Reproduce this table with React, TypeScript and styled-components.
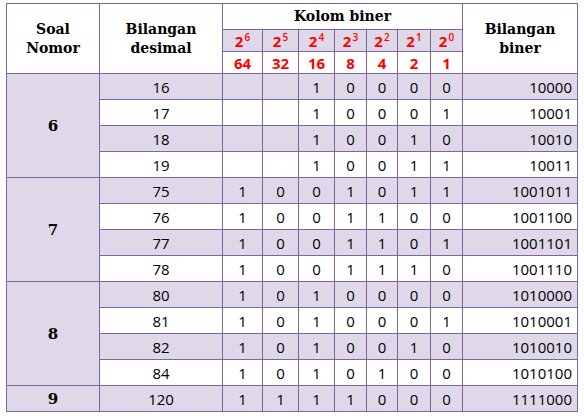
import React from 'react';
import styled, { createGlobalStyle, css } from 'styled-components';

const GlobalStyle = createGlobalStyle`
  body {
    margin: 0;
    background: #ffffff;
  }
`;

const LINE = '#8064a2';
const SHADE = '#dfd8e8';

const Wrapper = styled.div`
  padding: 3px 0 0 6px;
`;

const Table = styled.table`
  border-collapse: collapse;
  table-layout: fixed;
  width: 572px;
  border: 1px solid ${LINE};
`;

const cell = css<{ $shaded?: boolean }>`
  border: 1px solid ${LINE};
  padding: 0;
  background: ${(p) => (p.$shaded ? SHADE : '#ffffff')};
`;

const HeadCell = styled.th<{ $shaded?: boolean }>`
  ${cell}
  font-family: "DejaVu Serif", serif;
  font-weight: bold;
  font-size: 14px;
  line-height: 19px;
  color: #000;
  text-align: center;
  vertical-align: middle;
`;

const PowerCell = styled.th<{ $shaded?: boolean }>`
  ${cell}
  height: 21px;
  font-family: "Open Sans", sans-serif;
  font-weight: bold;
  font-size: 15px;
  color: #ff0000;
  text-align: center;
  vertical-align: middle;

  sup {
    font-size: 10px;
    font-weight: 600;
    vertical-align: 6px;
    line-height: 0;
    margin-left: 1px;
  }
`;

const SoalCell = styled.td<{ $shaded?: boolean }>`
  ${cell}
  font-family: "DejaVu Serif", serif;
  font-weight: bold;
  font-size: 15px;
  text-align: center;
  vertical-align: middle;
`;

const Cell = styled.td<{ $shaded?: boolean; $right?: boolean }>`
  ${cell}
  height: 25px;
  font-family: "Open Sans", sans-serif;
  font-size: 15px;
  color: #000;
  text-align: ${(p) => (p.$right ? 'right' : 'center')};
  padding-right: ${(p) => (p.$right ? '5px' : '0')};
  vertical-align: middle;
`;

const widths = [93, 123, 40, 36, 36, 32, 31, 33, 32, 115];
const powers = [6, 5, 4, 3, 2, 1, 0];

type Group = { soal: string; values: number[] };

const groups: Group[] = [
  { soal: '6', values: [16, 17, 18, 19] },
  { soal: '7', values: [75, 76, 77, 78] },
  { soal: '8', values: [80, 81, 82, 84] },
  { soal: '9', values: [120] },
];

const bitsOf = (n: number) => {
  const s = n.toString(2);
  const padded = s.padStart(7, ' ');
  return padded.split('').map((c) => (c === ' ' ? '' : c));
};

export default function App() {
  return (
    <Wrapper>
      <GlobalStyle />
      <Table>
        <colgroup>
          {widths.map((w, i) => (
            <col key={i} style={{ width: w }} />
          ))}
        </colgroup>
        <thead>
          <tr>
            <HeadCell rowSpan={3}>
              Soal
              <br />
              Nomor
            </HeadCell>
            <HeadCell rowSpan={3}>
              Bilangan
              <br />
              desimal
            </HeadCell>
            <HeadCell colSpan={7} style={{ height: 25 }}>
              Kolom biner
            </HeadCell>
            <HeadCell rowSpan={3}>
              Bilangan
              <br />
              biner
            </HeadCell>
          </tr>
          <tr>
            {powers.map((p) => (
              <PowerCell key={p} $shaded>
                2<sup>{p}</sup>
              </PowerCell>
            ))}
          </tr>
          <tr>
            {powers.map((p) => (
              <PowerCell key={p}>{2 ** p}</PowerCell>
            ))}
          </tr>
        </thead>
        <tbody>
          {groups.map((g) =>
            g.values.map((v, i) => {
              const shaded = i % 2 === 0;
              return (
                <tr key={v}>
                  {i === 0 && (
                    <SoalCell rowSpan={g.values.length} $shaded>
                      {g.soal}
                    </SoalCell>
                  )}
                  <Cell $shaded={shaded}>{v}</Cell>
                  {bitsOf(v).map((b, j) => (
                    <Cell key={j} $shaded={shaded}>
                      {b}
                    </Cell>
                  ))}
                  <Cell $shaded={shaded} $right>
                    {v.toString(2)}
                  </Cell>
                </tr>
              );
            })
          )}
        </tbody>
      </Table>
    </Wrapper>
  );
}
